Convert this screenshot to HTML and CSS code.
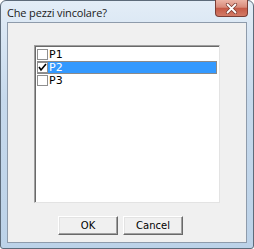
FILE: index.html
```html
<!DOCTYPE html>
<html lang="it">
<head>
  <meta charset="UTF-8" />
  <title>Che pezzi vincolare?</title>
  <link rel="stylesheet" href="styles.css">
</head>
<body>

  <div class="window">
    <!-- Title bar -->
    <div class="titlebar">
      <span class="title">Che pezzi vincolare?</span>
      <div class="close">
        <svg width="13" height="11" viewBox="0 0 13 11">
          <path d="M2.5 1.5 L10.5 9.5 M10.5 1.5 L2.5 9.5" stroke="#7a3a30" stroke-width="3.2" stroke-linecap="round" />
          <path d="M2.5 1.5 L10.5 9.5 M10.5 1.5 L2.5 9.5" stroke="#fff" stroke-width="1.8" stroke-linecap="round" />
        </svg>
      </div>
    </div>

    <!-- Client area -->
    <div class="client">
      <div class="listbox">
        <div class="item"><span class="check"></span>P1</div>
        <div class="item selected"><span class="check checked">
          <svg width="9" height="9" viewBox="0 0 9 9"><path d="M1 4 L3 7 L8 1" stroke="#000" stroke-width="1.6" fill="none" /></svg>
        </span>P2</div>
        <div class="item"><span class="check"></span>P3</div>
      </div>

      <div class="buttons">
        <button>OK</button>
        <button>Cancel</button>
      </div>
    </div>
  </div>

</body>
</html>
```

FILE: styles.css
```css
body {
  margin: 0;
  background: #fff;
}

.window {
  width: 254px;
  height: 249px;
  box-sizing: border-box;
  border: 1px solid #5d6b7a;
  border-radius: 6px 6px 3px 3px;
  background: linear-gradient(180deg, #e3edf7 0%, #c6d9ec 40%, #bcd2e8 100%);
  padding: 0 6px 5px 6px;
  display: flex;
  flex-direction: column;
}

.titlebar {
  height: 21px;
  display: flex;
  align-items: flex-start;
  position: relative;
}

.title {
  font-family: "Open Sans", sans-serif;
  font-size: 11px;
  color: #1a1a1a;
  margin-top: 4px;
  letter-spacing: -0.15px;
}

.close {
  position: absolute;
  top: -1px;
  right: -1px;
  width: 33px;
  height: 17px;
  box-sizing: border-box;
  border: 1px solid #7a3d35;
  border-top: none;
  border-radius: 0 0 4px 4px;
  background: linear-gradient(180deg, #ecb4a6 0%, #d88b7b 45%, #c55a47 52%, #d27a66 100%);
  display: flex;
  align-items: center;
  justify-content: center;
}

.client {
  flex: 1;
  border: 1px solid #8e9bab;
  background: #f0f0f0;
  display: flex;
  flex-direction: column;
}

.listbox {
  margin: 22px 0 0 26px;
  width: 186px;
  height: 158px;
  box-sizing: border-box;
  background: #fff;
  border-top: 1px solid #a0a0a0;
  border-left: 1px solid #a0a0a0;
  border-right: 1px solid #e3e3e3;
  border-bottom: 1px solid #e3e3e3;
  box-shadow: inset 1px 1px 0 #696969;
  padding: 2px 2px 0 2px;
  font-family: "DejaVu Sans", sans-serif;
  font-size: 11px;
}

.item {
  height: 13px;
  display: flex;
  align-items: center;
  line-height: 13px;
  color: #000;
}

.item.selected {
  background: #3399ff;
  color: #fff;
  box-shadow: inset 0 1px 0 #8a8a8a, inset 0 -1px 0 #8a8a8a, inset -1px 0 0 #8a8a8a;
}

.check {
  width: 11px;
  height: 11px;
  box-sizing: border-box;
  border: 1px solid #8f8f8f;
  background: #fff;
  margin-right: 1px;
  display: flex;
  align-items: center;
  justify-content: center;
}

.buttons {
  display: flex;
  gap: 5px;
  margin: 13px 0 0 50px;
}

button {
  width: 60px;
  height: 19px;
  box-sizing: border-box;
  background: #f0f0f0;
  border: 1px solid;
  border-color: #fff #696969 #696969 #fff;
  box-shadow: inset -1px -1px 0 #a0a0a0, inset 1px 1px 0 #e3e3e3;
  font-family: "DejaVu Sans", sans-serif;
  font-size: 10px;
  color: #000;
  padding: 0;
}
```
